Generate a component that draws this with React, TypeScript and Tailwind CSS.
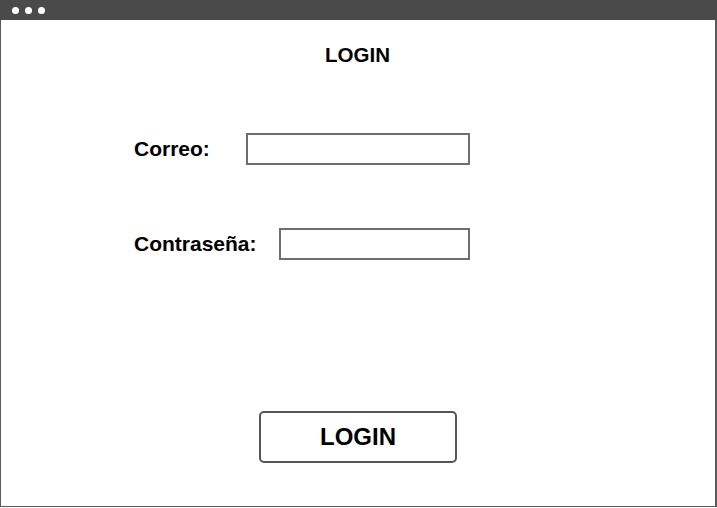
import React from "react";

export default function App() {
  return (
    <div className="w-[717px] h-[508px] bg-white flex flex-col" style={{ fontFamily: '"Liberation Sans", Arial, sans-serif' }}>
      <div className="h-[20px] bg-[#4a4a4a] flex items-center gap-[6px] pl-[12px] shrink-0">
        <span className="w-[7px] h-[7px] rounded-full bg-white" />
        <span className="w-[7px] h-[7px] rounded-full bg-white" />
        <span className="w-[7px] h-[7px] rounded-full bg-white" />
      </div>
      <div className="h-[487px] border-l-[1.5px] border-r-2 border-b-[1.5px] border-[#5a5a5a] flex flex-col">
        <div className="mt-[23px] pr-[1px] text-center text-[20.5px] leading-[24px] font-bold text-black">LOGIN</div>
        <div className="mt-[66px] flex items-center pl-[133px]">
          <span className="text-[21px] leading-[24px] font-bold text-black w-[112px]">Correo:</span>
          <div className="w-[224px] h-[32px] border-2 border-[#6e6e6e]" />
        </div>
        <div className="mt-[63px] flex items-center pl-[133px]">
          <span className="text-[21px] leading-[24px] font-bold text-black w-[145px]">Contraseña:</span>
          <div className="w-[191px] h-[32px] border-2 border-[#6e6e6e]" />
        </div>
        <div className="mt-[151px] flex justify-center">
          <div className="w-[198px] h-[52px] rounded-[5px] border-2 border-[#555] flex items-center justify-center text-[24px] font-bold text-black">
            LOGIN
          </div>
        </div>
      </div>
    </div>
  );
}
